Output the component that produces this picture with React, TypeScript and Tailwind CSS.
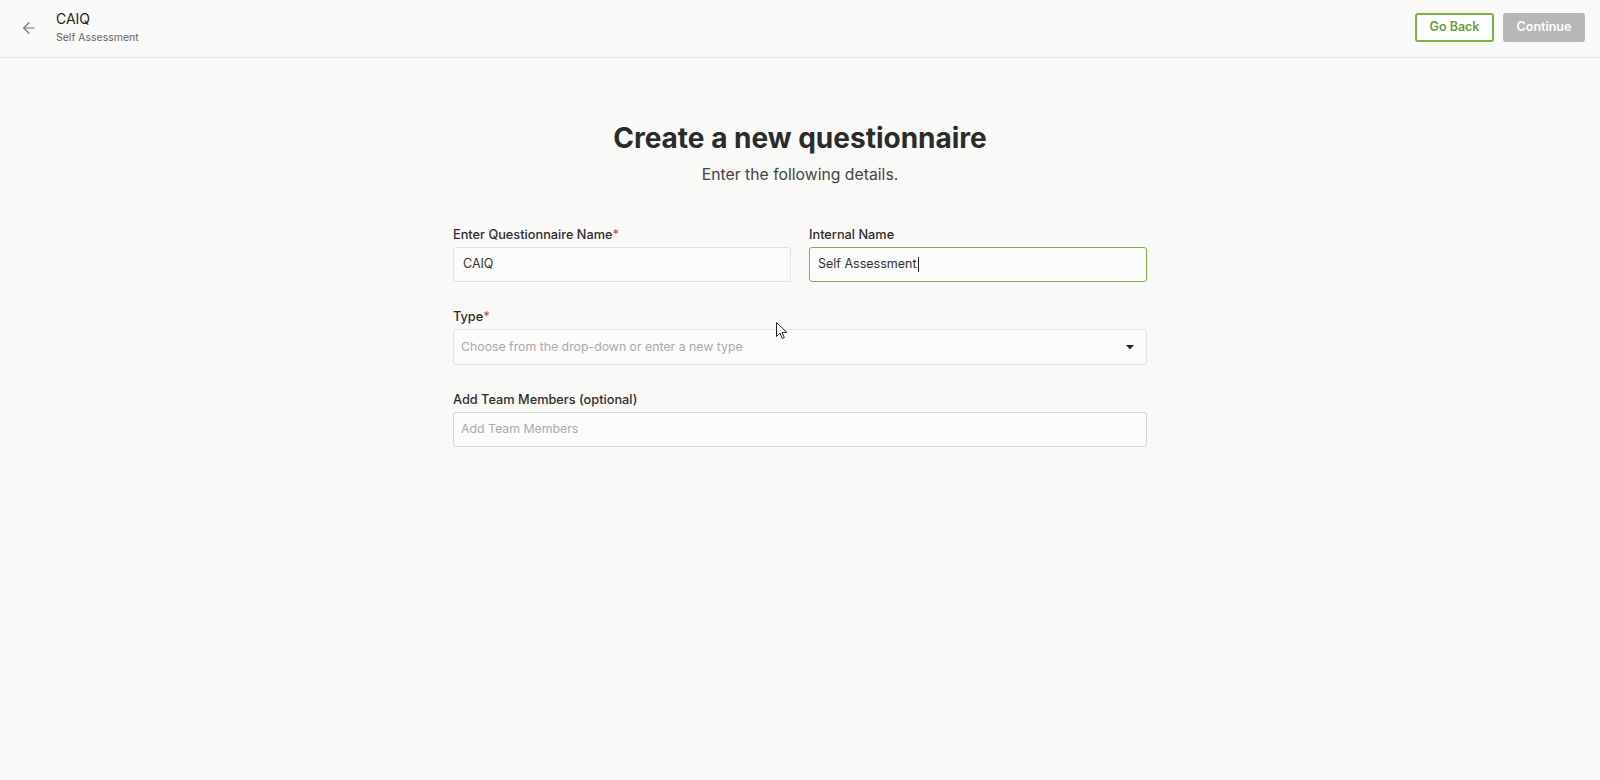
import { ArrowLeft } from "lucide-react";

const font = { fontFamily: "Inter, 'Liberation Sans', sans-serif" };

function Field({
  label,
  required,
  children,
}: {
  label: string;
  required?: boolean;
  children: React.ReactNode;
}) {
  return (
    <div className="flex flex-col">
      <label className="text-[12.75px] font-medium text-[#2f2f2f] leading-[17px] mb-[4px]">
        {label}
        {required && <span className="text-[#b9553f]">*</span>}
      </label>
      {children}
    </div>
  );
}

export default function App() {
  return (
    <div className="min-h-[780px] bg-[#f9f9f8] text-[#333]" style={font}>
      <header className="h-[58px] flex items-start justify-between pl-5 pr-[15px] border-b border-[#e1ebe9]">
        <div className="flex items-center gap-[18px] pt-[10px]">
          <ArrowLeft size={18} strokeWidth={1.6} className="text-[#777]" />
          <div className="flex flex-col">
            <span className="text-[14px] leading-[18px] text-[#222]">CAIQ</span>
            <span className="text-[10.5px] leading-[16px] text-[#666] mt-[2px]">Self Assessment</span>
          </div>
        </div>
        <div className="flex items-center gap-[9px] pt-[13px]">
          <button className="h-[29px] w-[79px] rounded-[3px] border-2 border-[#7cb342] text-[12.5px] font-semibold text-[#6a9d36] bg-white">
            Go Back
          </button>
          <button className="h-[29px] w-[82px] rounded-[3px] bg-[#b7b7b7] text-[12.5px] font-semibold text-white">
            Continue
          </button>
        </div>
      </header>

      <main className="flex flex-col items-center pt-[63px]">
        <h1 className="text-[28px] leading-[34px] font-bold text-[#2b2b2b]">
          Create a new questionnaire
        </h1>
        <p className="text-[15.75px] leading-[20px] text-[#444] mt-[10px]">Enter the following details.</p>

        <div className="w-[694px] mt-[41px] flex flex-col gap-[26px]">
          <div className="grid grid-cols-2 gap-[18px]">
            <Field label="Enter Questionnaire Name" required>
              <div className="h-[35px] rounded-[3px] border border-[#e2e2e2] bg-[#fbfbfb] flex items-center px-[9px] text-[12.5px] text-[#333]">
                CAIQ
              </div>
            </Field>
            <Field label="Internal Name">
              <div className="h-[35px] rounded-[3px] border border-[#7cb342] bg-[#fbfbfb] flex items-center px-[8px] text-[12.5px] text-[#333]">
                Self Assessment
                <span className="inline-block w-px h-[15px] bg-[#222] ml-px" />
              </div>
            </Field>
          </div>

          <Field label="Type" required>
            <div className="h-[36px] rounded-[3px] border border-[#e2e2e2] bg-[#fbfbfb] flex items-center justify-between px-[7px] text-[12.3px] text-[#aaa]">
              Choose from the drop-down or enter a new type
              <svg width="8" height="5" viewBox="0 0 8 5" className="mr-[5px]">
                <path d="M0 0H8L4 4.5Z" fill="#1e2340" />
              </svg>
            </div>
          </Field>

          <Field label="Add Team Members (optional)">
            <div className="h-[35px] rounded-[3px] border border-[#d6d6d6] bg-[#fbfbfb] flex items-center px-[7px] text-[12.3px] text-[#aaa]">
              Add Team Members
            </div>
          </Field>
        </div>
      </main>

      <svg
        className="absolute left-[776px] top-[322px]"
        width="12"
        height="18"
        viewBox="0 0 12 18"
      >
        <path
          d="M0.5 0.5V14.5L4 11.2L6.3 16.5L8.3 15.6L6 10.4H10.8Z"
          fill="white"
          stroke="#222"
          strokeWidth="1"
          strokeLinejoin="round"
        />
      </svg>
    </div>
  );
}
